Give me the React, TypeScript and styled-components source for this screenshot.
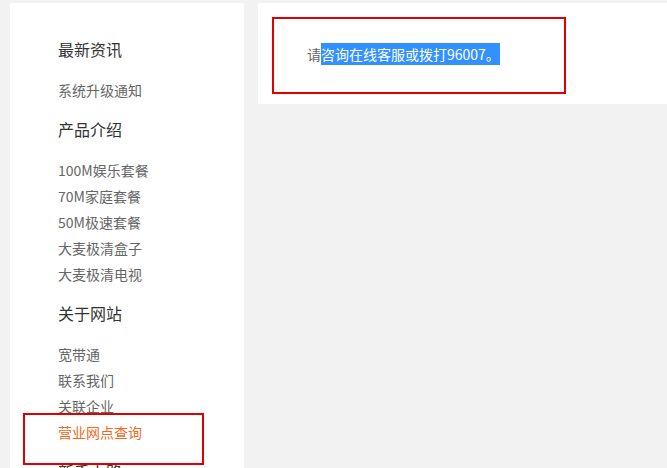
import styled, { createGlobalStyle } from "styled-components";

const GlobalStyle = createGlobalStyle`
  html, body {
    margin: 0;
    padding: 0;
    background: #f2f2f2;
    font-family: "Noto Sans CJK SC", "Noto Sans", sans-serif;
  }
`;

const Page = styled.div`
  position: relative;
  display: flex;
  align-items: flex-start;
  gap: 14px;
  padding: 3px 0 0 10px;
  height: 465px;
  overflow: hidden;
`;

const Sidebar = styled.nav`
  flex: 0 0 234px;
  box-sizing: border-box;
  min-height: 560px;
  background: #fff;
  padding: 20px 0 0 48px;
`;

const Group = styled.div`
  display: flex;
  flex-direction: column;
`;

const GroupTitle = styled.h3`
  margin: 14px 0 16px;
  font-size: 16px;
  line-height: 24px;
  font-weight: normal;
  color: #333;
`;

const NavItem = styled.a<{ $active?: boolean }>`
  font-size: 14px;
  line-height: 26px;
  color: ${(p) => (p.$active ? "#f26a1b" : "#666")};
  text-decoration: none;
`;

const Main = styled.main`
  flex: 1;
  height: 101px;
  box-sizing: border-box;
  background: #fff;
  padding: 41px 0 0 49px;
`;

const Notice = styled.p`
  margin: 0;
  font-size: 14px;
  line-height: 20px;
  color: #666;
`;

const Selected = styled.span`
  background: #3390ff;
  color: #fff;
  padding: 1px 0;
`;

const Marker = styled.div<{ $l: number; $t: number; $w: number; $h: number }>`
  position: absolute;
  left: ${(p) => p.$l}px;
  top: ${(p) => p.$t}px;
  width: ${(p) => p.$w}px;
  height: ${(p) => p.$h}px;
  box-sizing: border-box;
  border: 2px solid #e00000;
  pointer-events: none;
`;

const groups = [
  { title: "最新资讯", items: ["系统升级通知"] },
  {
    title: "产品介绍",
    items: ["100M娱乐套餐", "70M家庭套餐", "50M极速套餐", "大麦极清盒子", "大麦极清电视"],
  },
  { title: "关于网站", items: ["宽带通", "联系我们", "关联企业", "营业网点查询"] },
  { title: "新手上路", items: ["常见问题"] },
];

function App() {
  return (
    <>
      <GlobalStyle />
      <Page>
        <Sidebar>
          {groups.map((g) => (
            <Group key={g.title}>
              <GroupTitle>{g.title}</GroupTitle>
              {g.items.map((item) => (
                <NavItem key={item} href="#" $active={item === "营业网点查询"}>
                  {item}
                </NavItem>
              ))}
            </Group>
          ))}
        </Sidebar>
        <Main>
          <Notice>
            请<Selected>咨询在线客服或拨打96007。</Selected>
          </Notice>
        </Main>
        <Marker $l={272} $t={17} $w={294} $h={77} />
        <Marker $l={23} $t={413} $w={181} $h={52} />
      </Page>
    </>
  );
}

export default App;
